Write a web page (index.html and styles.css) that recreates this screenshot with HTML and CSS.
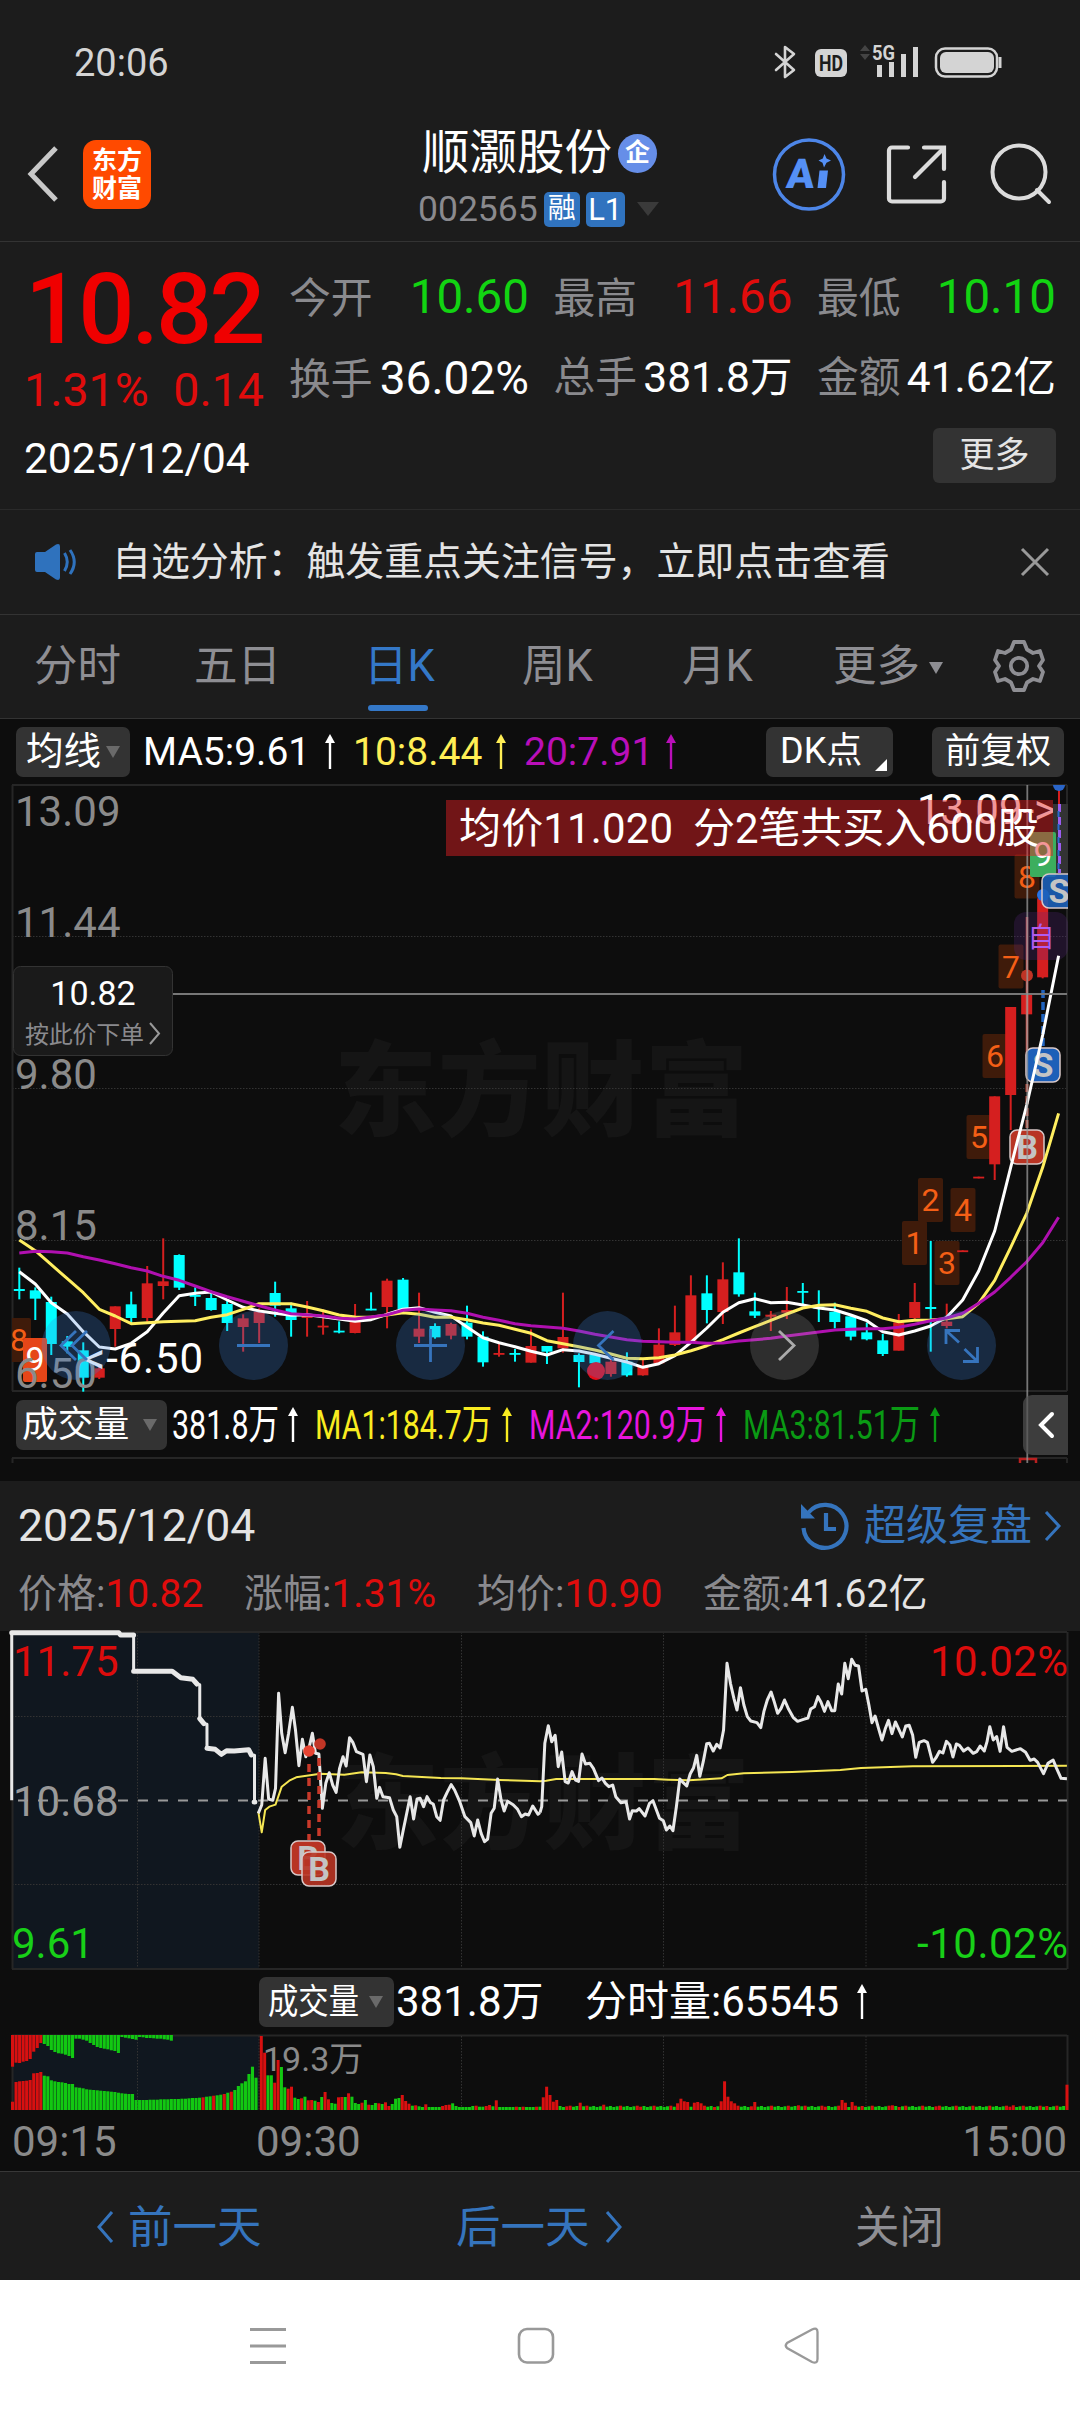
FILE: index.html
```html
<!DOCTYPE html>
<html lang="zh-CN">
<head>
<meta charset="utf-8">
<title>顺灏股份 002565</title>
<link rel="stylesheet" href="styles.css">
</head>
<body>
<div class="status">
  <span class="clock">20:06</span>
  <svg class="status-icons" width="236" height="40" viewBox="770 40 236 40">
    <g fill="none" stroke="#d4d4d4" stroke-width="2.6" stroke-linejoin="round" stroke-linecap="round"><path d="M776 54 L794 70 L785 77 V47 L794 54 L776 70"/></g>
    <rect x="815" y="49" width="32" height="28" rx="6" fill="#d4d4d4"/>
    <text x="831" y="70.500" class="hd" text-anchor="middle" textLength="24" lengthAdjust="spacingAndGlyphs">HD</text>
    <path d="M860 51l5-6 5 6zM860 54l5 6 5-6z" fill="#444"/>
    <text x="872" y="60" class="fiveg" textLength="23" lengthAdjust="spacingAndGlyphs">5G</text>
    <g fill="#d4d4d4"><rect x="877" y="65" width="5" height="12"/><rect x="889" y="62" width="5" height="15"/><rect x="901" y="54" width="5" height="23"/><rect x="913" y="47" width="5" height="30"/></g>
    <rect x="936" y="48.500" width="61" height="28" rx="9" fill="none" stroke="#d4d4d4" stroke-width="2.500"/>
    <rect x="940" y="52" width="54" height="21" rx="6" fill="#d4d4d4"/><path d="M1000 57v11" stroke="#d4d4d4" stroke-width="3"/>
  </svg>
</div>

<header class="header">
  <svg class="back" width="31" height="60" viewBox="0 0 31 60"><path d="M29 4 L4 30 L29 56" fill="none" stroke="#c8c8c8" stroke-width="5"/></svg>
  <div class="logo"><span>东方</span><span>财富</span></div>
  <div class="title">
    <div class="name">顺灏股份<span class="ent">企</span></div>
    <div class="code">002565<span class="tag">融</span><span class="tag tag-l">L1</span><i class="tri tri-dark"></i></div>
  </div>
  <svg class="tools" width="290" height="74" viewBox="770 138 290 74">
    <circle cx="809" cy="174.500" r="34.500" fill="none" stroke="#4d86e8" stroke-width="3.500"/>
    <text transform="translate(785.500 187.500) skewX(-5)" class="ai">A</text>
    <path d="M819.500 170.500h8.500l-2 17.500h-8.500z" fill="#5590f5"/><path d="M824.500 154l2 4.500 4.500 2-4.500 2.200-2.500 4.800-1.500-4.800-4-2.200 4.300-2z" fill="#5590f5"/>
    <g fill="none" stroke="#dcdcdc" stroke-width="4.200" stroke-linecap="round"><path d="M908 147.500 H892 a3 3 0 0 0-3 3 V198.500 a3 3 0 0 0 3 3 H941 a3 3 0 0 0 3-3 V182"/><path d="M924 147.500H944V169"/><path d="M943 149 L915 177"/></g>
    <g fill="none" stroke="#dcdcdc" stroke-width="4"><circle cx="1019" cy="172" r="26.500"/><path d="M1037 190 L1049 202" stroke-linecap="round"/></g>
  </svg>
</header>

<section class="quote">
  <div class="price">
    <div class="last">10.82</div>
    <div class="chg"><span>1.31%</span><span>0.14</span></div>
    <div class="date">2025/12/04</div>
  </div>
  <div class="stats">
    <div class="stat"><label>今开</label><b class="green">10.60</b></div>
    <div class="stat"><label>最高</label><b class="red">11.66</b></div>
    <div class="stat"><label>最低</label><b class="green">10.10</b></div>
    <div class="stat"><label>换手</label><b class="pct">36.02%</b></div>
    <div class="stat"><label>总手</label><b class="sm">381.8万</b></div>
    <div class="stat"><label>金额</label><b class="sm">41.62亿</b></div>
    <button class="more">更多</button>
  </div>
</section>

<section class="notice">
  <svg width="46" height="40" viewBox="0 0 46 40"><path d="M3 12q0-2 2-2h8L24 2.500q4-1.500 4 2v31q0 3.500-4 2L13 30H5q-2 0-2-2z" fill="#2f72bd"/><path d="M32.500 11q5.500 9 0 18M38 8q8.500 12 0 24" fill="none" stroke="#2f72bd" stroke-width="3"/></svg>
  <span>自选分析：触发重点关注信号，立即点击查看</span>
  <svg class="close" width="30" height="30" viewBox="0 0 30 30"><path d="M2 2L28 28M28 2L2 28" stroke="#999" stroke-width="3"/></svg>
</section>

<nav class="tabs">
  <span>分时</span><span>五日</span><span class="active">日K</span><span>周K</span><span>月K</span><span>更多<i class="tri tri-tab"></i></span>
  <svg width="52" height="54" viewBox="-26 -27 52 54"><path d="M-5 -24 H5 L8 -16.500 L14 -13 L21 -15 L24 -6 L20 0 L24 6 L21 15 L14 13 L8 16.500 L5 24 H-5 L-8 16.500 L-14 13 L-21 15 L-24 6 L-20 0 L-24 -6 L-21 -15 L-14 -13 L-8 -16.500 Z" fill="none" stroke="#8e8e93" stroke-width="3.800" stroke-linejoin="round"/><circle r="8.200" fill="none" stroke="#8e8e93" stroke-width="3.800"/></svg>
</nav>

<div class="mabar">
  <button class="chip chip-ma">均线<i class="tri"></i></button>
  <span class="ma w">MA5:9.61</span><svg class="up w"><use href="#arrow"/></svg>
  <span class="ma y">10:8.44</span><svg class="up y"><use href="#arrow"/></svg>
  <span class="ma m">20:7.91</span><svg class="up m"><use href="#arrow"/></svg>
  <button class="chip chip-dk">DK点<i class="corner"></i></button>
  <button class="chip chip-fq">前复权</button>
</div>

<svg class="kchart" width="1080" height="614" viewBox="0 780 1080 614">
  <defs>
    <symbol id="arrow" viewBox="0 0 14 36" width="14" height="36"><path d="M5.800 8h2.400v27H5.800z" fill="currentColor"/><path d="M7 0l5 9H2z" fill="currentColor"/></symbol>
    <clipPath id="frame"><rect x="12" y="785" width="1056" height="607"/></clipPath>
  </defs>
  <text class="wm" x="334" y="1128" textLength="414">东方财富</text>
  <g class="grid"><path d="M12 936.500H1067M12 1088.500H1067M12 1240.500H1067"/></g>
  <path class="edge" d="M12 785H1067M12 1391H1067M12.500 785V1391M1067 785V1391"/>
  <g class="axis"><text x="15" y="826">13.09</text><text x="15" y="937">11.44</text><text x="15" y="1089">9.80</text><text x="15" y="1240">8.15</text></g>
  <text class="peak" x="917" y="824">13.09-&gt;</text>
  <g clip-path="url(#frame)">
    <g class="labels" id="labels"></g>
    <rect x="1053" y="804" width="15" height="70" fill="#333"/>
    <g id="candles"></g>
    <path d="M1059 785V805" stroke="#d51f1f" stroke-width="2"/>
    <path d="M1027 917V1072" stroke="#d8504a" stroke-width="2.500"/>
    <path d="M1043 990V1047" stroke="#2064c0" stroke-width="3.500" stroke-dasharray="8 4"/>
    <path d="M1059.500 804V873" stroke="#9b5cf0" stroke-width="3" stroke-dasharray="8 5"/>
    <path d="M1058.500 811V873" stroke="#2a6ad0" stroke-width="2" stroke-dasharray="6 7"/>
    <path d="M1027 1084V1130" stroke="#c05040" stroke-width="3" stroke-dasharray="8 4"/>
    <circle cx="596" cy="1371" r="9" fill="#e80c18"/>
    <circle cx="1027" cy="975.500" r="6" fill="#c03425"/><circle cx="1059" cy="785" r="6" fill="#2a65c8"/>
    <rect x="1030" y="832" width="26" height="45" rx="2" fill="#3cae5e"/><text class="nine" x="1043" y="866">9</text>
    <circle cx="1043" cy="895" r="6" fill="#2673e8"/>
    <g class="sq blue"><rect x="1042" y="874" width="36" height="34" rx="7" fill-opacity=".9"/><text x="1059" y="903">S</text></g>
    <rect x="1014" y="912" width="54" height="48" rx="12" fill="rgba(90,40,130,.25)"/><text x="1041" y="947" class="zi">自</text>
    <g class="sq blue"><rect x="1026" y="1048" width="34" height="34" rx="7"/><text x="1043" y="1077">S</text></g>
    <g class="sq redb"><rect x="1010" y="1130" width="34" height="34" rx="7"/><text x="1027" y="1159">B</text></g>
    <g id="lines"></g>
    <rect x="6" y="1318" width="25" height="44" rx="2" fill="#3f1b0a"/><text class="num" x="19" y="1351">8</text>
    <rect x="23" y="1338" width="24" height="44" rx="2" fill="#e64618"/><text class="nine" x="35" y="1371">9</text>
  </g>
  <g class="axis"><text x="15" y="1388">6.50</text></g>
  <text class="low" x="84" y="1373" textLength="119">&lt;-6.50</text>
  <path d="M173 994H1067" stroke="#777" stroke-width="2"/>
  <path d="M1027.300 785V1463" stroke="#999" stroke-opacity=".75" stroke-width="1.800"/>
  <rect x="446" y="800" width="607" height="56" fill="rgba(228,32,36,.47)"/>
  <text class="banner" x="459" y="843" textLength="214">均价11.020</text><text class="banner" x="693" y="843" textLength="346">分2笔共买入600股</text>
  <rect x="13.500" y="966.500" width="159" height="89" rx="7" fill="#1a1a1a" stroke="#333"/>
  <text class="order" x="93" y="1005">10.82</text><text class="ordersub" x="25" y="1043" textLength="119">按此价下单</text>
  <path d="M150 1023L159 1033.500L150 1044" fill="none" stroke="#999" stroke-width="2"/>
  <g fill="rgba(60,133,225,.25)"><circle cx="76" cy="1345.500" r="34.500"/><circle cx="253.500" cy="1345.500" r="34.500"/><circle cx="430.500" cy="1345.500" r="34.500"/><circle cx="607.500" cy="1345.500" r="34.500"/><circle cx="784.500" cy="1345.500" r="34.500" fill="rgba(180,180,180,.2)"/><circle cx="961.500" cy="1345.500" r="34.500"/></g>
  <g fill="none" stroke="#3674bd" stroke-width="2.800"><path d="M76 1331L61 1345.500L76 1360M87 1331L72 1345.500L87 1360M237 1345.500H270M414 1345.500H447M430.500 1329V1362M613.500 1331L598.500 1345.500L613.500 1360"/><path d="M960 1330.500H946V1344M946 1330.500L959 1342.500M977.500 1347V1361.500H963M977.500 1361.500L964.500 1349"/><path d="M779 1331L794 1345.500L779 1360" stroke="#aaa"/></g>
</svg>

<div class="volbar">
  <button class="chip chip-vol">成交量<i class="tri"></i></button>
  <svg width="780" height="50" viewBox="168 1400 780 50" class="vtext">
    <text x="172" y="1439" fill="#fff" textLength="107" lengthAdjust="spacingAndGlyphs">381.8万</text><use href="#arrow" x="286" y="1407" color="#fff"/>
    <text x="315" y="1439" fill="#f9ec20" textLength="177" lengthAdjust="spacingAndGlyphs">MA1:184.7万</text><use href="#arrow" x="500" y="1407" color="#f9ec20"/>
    <text x="529" y="1439" fill="#e815dd" textLength="177" lengthAdjust="spacingAndGlyphs">MA2:120.9万</text><use href="#arrow" x="714" y="1407" color="#e815dd"/>
    <text x="743" y="1439" fill="#0a9a14" textLength="177" lengthAdjust="spacingAndGlyphs">MA3:81.51万</text><use href="#arrow" x="928" y="1407" color="#0a9a14"/>
  </svg>
  <div class="drawer"><svg width="20" height="30" viewBox="0 0 20 30"><path d="M15 4L4 15L15 26" fill="none" stroke="#fff" stroke-width="4" stroke-linecap="round"/></svg></div>
</div>
<svg class="strip" width="1080" height="25" viewBox="0 1456 1080 25"><path class="edge" d="M12 1458H1067M12.500 1458V1463M1067 1458V1463"/><path d="M1020 1463V1459H1036V1463" fill="none" stroke="#b82020" stroke-width="2.500"/></svg>

<section class="review">
  <div class="review-top"><span class="rdate">2025/12/04</span>
    <a class="replay"><svg width="52" height="52" viewBox="-26 -26 52 52"><path d="M-16.500 -13.500A21.500 21.500 0 1 1 -21.500 2" fill="none" stroke="#3574bd" stroke-width="4.200"/><path d="M-24 -22V-7.500H-10z" fill="#3574bd"/><path d="M1 -13V3H11" fill="none" stroke="#3574bd" stroke-width="4.200"/></svg>超级复盘<svg width="18" height="32" viewBox="0 0 18 32"><path d="M2 2L15 16L2 30" fill="none" stroke="#3574bd" stroke-width="3"/></svg></a>
  </div>
  <div class="review-row"><span>价格:<b class="red">10.82</b></span><span>涨幅:<b class="red">1.31%</b></span><span>均价:<b class="red">10.90</b></span><span>金额:<b>41.62亿</b></span></div>
</section>

<svg class="minute" width="1080" height="346" viewBox="0 1631 1080 346">
  <rect x="12" y="1632" width="247" height="337" fill="#10171f"/>
  <text class="wm" x="336" y="1841" textLength="414">东方财富</text>
  <g class="grid"><path d="M12 1716.500H1067M12 1884.500H1067M137.500 1632V1969M259 1632V1969M461.500 1632V1969M663.500 1632V1969M866 1632V1969"/></g>
  <path class="edge" d="M12 1632H1067M12 1969H1067M12.500 1632V1969M1067.500 1632V1969"/>
  <path d="M12 1800.500H1067" stroke="#999" stroke-width="1.800" stroke-dasharray="10 10" stroke-dashoffset="-6"/>
  <g class="axis"><text x="13" y="1676" class="tr">11.75</text><text x="13" y="1816" class="tg">10.68</text><text x="12" y="1958" class="tgr">9.61</text><text x="1068" y="1676" class="tr" text-anchor="end" textLength="138">10.02%</text><text x="1068" y="1958" class="tgr" text-anchor="end" textLength="151">-10.02%</text></g>
  <g class="trace" transform="translate(0 1620) scale(.34439 .33333)">
    <polyline class="avg" points="750,575 760,637 770,570 782,560 800,554 818,500 840,482 860,472 900,466 930,461 1000,464 1050,457 1120,459 1150,463 1170,468 1280,474 1340,475 1450,480 1568,484 1586,482 1615,477 1900,477 1940,479 2000,481 2050,478 2095,475 2112,465 2160,460 2300,456 2440,450 2500,444 2650,439 3098,437"/>
    <polyline points="34,541 34,38 345,38 350,45 388,45 388,154 500,154 525,173 560,178 572,192 580,194 580,296 592,311 601,313 601,385 625,388 643,403 658,392 680,393 722,389 730,405 739,406 739,546"/>
    <path class="thick" d="M34 38H345L350 45H388M388 154H500L525 173L560 178L572 192M580 296L592 311M601 385L625 388L643 403L658 392L680 393L722 389L730 405M738 546H740"/>
    <polyline points="750,580 760,555 770,415 780,537 792,541 800,505 809,220 818,340 828,398 838,340 849,262 858,330 868,437 878,358 888,410 897,385 907,340 916,400 926,402 936,565 946,490 956,458 966,495 976,517 986,445 996,410 1005,438 1015,353 1025,368 1035,395 1054,403 1064,485 1074,405 1084,440 1094,535 1102,502 1112,530 1131,533 1142,570 1152,590 1161,682 1171,630 1191,530 1201,597 1211,537 1220,535 1230,560 1240,530 1250,548 1258,552 1268,590 1278,601 1288,540 1298,518 1310,494 1320,510 1335,545 1350,590 1367,608 1377,648 1387,600 1397,640 1407,665 1416,657 1426,580 1435,565 1445,477 1455,540 1464,573 1474,544 1490,554 1503,568 1514,590 1525,582 1535,585 1547,558 1562,583 1568,578"/>
    <polyline transform="translate(1568 0)" points="0,578 5,560 14,370 24,317 34,365 44,346 53,440 63,396 73,485 82,489 93,455 103,480 112,484 122,402 132,432 145,430 155,445 170,482 180,474 190,490 200,500 211,495 220,530 235,548 250,545 260,597 268,572 280,573 288,566 305,588 318,550 328,542 347,595 358,602 367,630 377,618 386,632 396,560 406,477 416,488 426,498 436,462 446,443 455,406 464,469 474,425 484,371 492,370 503,393 513,373 523,384 533,330 543,130 553,190 563,235 572,270 582,203 592,255 602,290 612,303 630,308 641,323 650,275 660,240 671,216 680,245 690,280 700,265 710,240 722,268 735,292 748,304 765,298 778,294 786,267 797,260 807,230 816,247 826,274 836,245 847,272 856,272 866,192 876,222 885,130 895,176 905,118 915,136 925,138 935,213 946,208 955,255 964,308 973,288 983,325 993,360 1002,328 1012,301 1022,341 1032,306 1042,328 1052,351 1062,318 1072,316 1082,345 1091,412 1101,367 1115,362 1125,367 1140,427 1150,413 1160,394 1170,399 1180,364 1190,375 1199,411 1209,372 1218,376 1230,393 1243,384 1258,400 1268,395 1278,378 1290,393 1298,365 1306,320 1316,360 1326,350 1336,394 1346,320 1356,382 1370,394 1395,386 1410,397 1423,421 1435,417 1445,427 1462,461 1475,430 1490,420 1500,445 1513,475 1530,476"/>
  </g>
  <g stroke="#c8392a" stroke-width="3.500" stroke-dasharray="8 6"><path d="M309 1764V1840M319 1758V1850"/></g>
  <circle cx="309" cy="1751" r="5.800" fill="#e84432"/><circle cx="320" cy="1744" r="5.800" fill="#c23626"/>
  <g class="sq redb"><rect x="291" y="1841" width="34" height="34" rx="7"/><text x="308" y="1870">B</text></g>
  <g class="sq redb"><rect x="302" y="1852" width="34" height="34" rx="7" fill-opacity=".9"/><text x="319" y="1881">B</text></g>
</svg>

<div class="mvol">
  <button class="chip chip-mvol"><svg width="93" height="46" viewBox="0 0 93 46"><text x="0" y="35" textLength="91" lengthAdjust="spacingAndGlyphs" fill="#fff" font-size="35">成交量</text></svg><i class="tri"></i></button>
  <span class="total">381.8万</span><span class="slice">分时量:65545</span><svg class="up w"><use href="#arrow"/></svg>
</div>
<svg class="volchart" width="1080" height="144" viewBox="0 2027 1080 144">
  <rect x="12" y="2035" width="247" height="75" fill="#10171f"/>
  <path class="edge" d="M12 2035.500H1067M12.500 2035V2110M1067.500 2035V2110"/>
  <g class="grid"><path d="M137.500 2036V2110M259 2036V2110M461.500 2036V2110M663.500 2036V2110M866 2036V2110"/></g>
  <g id="vol"></g>
  <text x="263" y="2071" class="vmax">19.3万</text>
  <g class="axis"><text x="12" y="2156">09:15</text><text x="256" y="2156">09:30</text><text x="1067" y="2156" text-anchor="end">15:00</text></g>
</svg>

<footer class="days">
  <span class="prev"><svg width="18" height="34" viewBox="0 0 18 34"><path d="M16 2L3 17L16 32" fill="none" stroke="#3574bd" stroke-width="3"/></svg><em>前一天</em></span>
  <span class="next"><em>后一天</em><svg width="18" height="34" viewBox="0 0 18 34"><path d="M2 2L15 17L2 32" fill="none" stroke="#3574bd" stroke-width="3"/></svg></span>
  <span class="shut"><em>关闭</em></span>
</footer>
<div class="sysnav"><svg width="1080" height="132" viewBox="0 2280 1080 132"><g fill="none" stroke="#999" stroke-width="2.600"><path d="M250 2329.500H286M250 2346H286M250 2362.500H286" stroke-width="3"/><rect x="519" y="2329" width="34" height="33.500" rx="8"/><path d="M787 2343Q784.500 2345.500 787 2348L812 2362Q817.500 2364 817.500 2359V2332Q817.500 2327 812 2329.500Z" stroke-width="2.300"/></g></svg></div>
<script src="chart.js"></script>
</body>
</html>
```
FILE: styles.css
```css
* { box-sizing: border-box; }
body { margin: 0; width: 1080px; background: #0d0d0d; color: #fff; font-family: Roboto, "Noto Sans CJK SC", sans-serif; }
svg { display: block; flex: none; overflow: visible; }
button { border: 0; padding: 0; margin: 0; font: inherit; color: inherit; }
b { font-weight: 400; }
i, em { font-style: normal; }
.red { color: #e00c0c; }
.green { color: #12d412; }
.tri { display: block; border: 7.5px solid transparent; border-top: 12px solid #6a6a6a; border-bottom: 0; }
.tri-dark { border: 11px solid transparent; border-top: 14px solid #3a3a3a; border-bottom: 0; margin-left: 12px; }
.tri-tab { border-top-color: #8e8e93; margin: 2px 0 0 9px; }

.status { height: 82px; background: #1c1c1c; display: flex; justify-content: space-between; align-items: flex-start; padding: 40px 74px 0; }
.clock { font-size: 38px; color: #d4d4d4; line-height: 46px; }
.hd { font: 700 22px Roboto, sans-serif; fill: #1c1c1c; }
.fiveg { font: 700 21px Roboto, sans-serif; fill: #d4d4d4; }

.header { height: 160px; background: #1c1c1c; border-bottom: 1px solid #333; display: flex; padding: 0 20px 0 27px; }
.back { margin-top: 62px; }
.logo { width: 68px; height: 69px; margin: 58px 0 0 25px; border-radius: 13px; background: #ff4a00; font-size: 25px; font-weight: 700; line-height: 28px; display: flex; flex-direction: column; align-items: center; justify-content: center; }
.title { margin: 41px 0 0 267px; width: 352px; }
.name { font-size: 47.5px; line-height: 62px; height: 60px; display: flex; align-items: center; margin-left: 4px; }
.ent { width: 39px; height: 39px; border-radius: 50%; background: #668ee8; font-size: 25px; font-weight: 700; line-height: 37px; text-align: center; margin-left: 6px; }
.code { font-size: 35.5px; line-height: 44px; color: #8a8a8e; display: flex; align-items: center; margin-top: 4px; }
.tag { background: #3073bf; color: #fff; border-radius: 5px; height: 35px; width: 36px; margin-left: 6px; font-size: 28px; line-height: 34px; text-align: center; }
.tag-l { width: 39px; margin-left: 6px; font-size: 31px; line-height: 36px; }
.tools { margin-top: 56px; }
.ai { font: 900 41px Roboto, sans-serif; fill: #5590f5; }

.quote { height: 268px; background: #1c1c1c; border-bottom: 1px solid #2a2a2a; display: flex; padding: 0 24px; }
.price { width: 265px; }
.last { font-size: 99px; font-weight: 500; line-height: 100px; color: #f00000; margin: 17px 0 0 1px; letter-spacing: -3px; }
.chg { display: flex; justify-content: space-between; font-size: 46.5px; line-height: 52px; color: #e00c0c; margin-top: 5px; padding-right: 25px; }
.date { font-size: 42.4px; line-height: 48px; margin-top: 19px; }
.stats { flex: 1; display: grid; grid-template-columns: 240px 239px 239px; column-gap: 24.5px; grid-template-rows: 81px 82px 56px; padding-top: 15px; }
.stat { display: flex; justify-content: space-between; align-items: baseline; line-height: 80px; }
.stat label { font-size: 41.8px; color: #8a8a8e; }
.stat b { font-size: 47.5px; }
.stat b.pct { font-size: 46px; }
.stat b.sm { font-size: 42.5px; }
.more { grid-column: 3; justify-self: end; width: 123px; height: 55px; margin-top: 8px; border-radius: 6px; background: #333; color: #e4e4e4; font-size: 35px; line-height: 54px; }

.notice { height: 105px; background: #1c1c1c; border-bottom: 1px solid #333; display: flex; align-items: center; padding: 0 30px 0 32px; font-size: 38.9px; color: #e4e4e4; }
.notice span { margin-left: 34px; line-height: 50px; white-space: nowrap; }
.notice .close { margin-left: auto; }

.tabs { height: 104px; background: #1c1c1c; border-bottom: 1px solid #333; display: grid; grid-template-columns: 160px 172px 156px 160px 151px 160px 52px; padding-left: 34px; font-size: 43.5px; color: #8e8e93; line-height: 104px; }
.tabs span { display: flex; align-items: center; white-space: nowrap; position: relative; }
.tabs .active { color: #3478c8; text-indent: -2px; }
.tabs .active::after { content: ""; position: absolute; left: 2px; bottom: 8px; width: 60px; height: 6px; border-radius: 3px; background: #3478c8; }
.tabs svg { margin-top: 24px; }

.chip { height: 50px; border-radius: 7px; background: #333; display: flex; align-items: center; line-height: 49px; }
.mabar { height: 61px; display: flex; align-items: center; padding-left: 16px; padding-top: 4px; font-size: 39px; }
.chip-ma { width: 114px; padding-left: 10px; font-size: 37.5px; gap: 5px; margin-right: 13px; }
.ma { line-height: 50px; white-space: nowrap; }
.ma.w { width: 180px; } .ma.y { width: 141px; } .ma.m { width: 140px; }
.w { color: #fff; } .y { color: #ffee55; } .m { color: #b90fb9; }
.up { width: 14px; height: 36px; margin-right: 16px; }
.chip-dk { width: 127px; padding-left: 14px; font-size: 36px; margin-left: 72px; position: relative; }
.corner { position: absolute; right: 6px; bottom: 6px; border-left: 12px solid transparent; border-bottom: 12px solid #fff; }
.chip-fq { width: 132px; justify-content: center; font-size: 35.5px; margin-left: 39px; }

.kchart { position: relative; z-index: 1; font-size: 42px; }
.wm { font: 900 103px "Noto Sans CJK SC", sans-serif; fill: #151515; }
.grid path { fill: none; stroke: #333; stroke-width: 1; stroke-dasharray: 1.5 1.5; }
.edge { fill: none; stroke: #262626; stroke-width: 2; }
.axis { font-size: 42px; fill: #8a8a8a; }
.axis .tr { fill: #dc0c0c; } .axis .tg { fill: #999; } .axis .tgr { fill: #18d018; }
.peak, .low, .banner { font-size: 42px; fill: #fff; }
.num { font-size: 32px; fill: #f55f16; text-anchor: middle; }
.nine { font-size: 34px; fill: #fff; text-anchor: middle; }
.zi { font-size: 27px; fill: #b05cf0; text-anchor: middle; }
.sq rect { stroke: #d8c8c8; stroke-width: 1.5; }
.sq text { font-size: 34px; font-weight: 700; fill: #c4c4c4; text-anchor: middle; }
.blue rect { fill: #1c5fb8; } .redb rect { fill: #b83424; }
.order { font-size: 34px; fill: #fff; text-anchor: middle; }
.ordersub { font-size: 24px; fill: #8a8a8e; }

.volbar { height: 62px; display: flex; padding: 6px 0 0 16px; }
.chip-vol { width: 151px; padding-left: 6px; gap: 14px; font-size: 35.8px; margin-right: 1px; }
.vtext { font-size: 41px; }
.drawer { width: 45px; height: 60px; margin: -5px 0 0 75px; background: rgba(80,80,80,.72); border-radius: 9px 0 0 9px; display: flex; align-items: center; padding-left: 14px; position: relative; z-index: 2; }

.review { height: 150px; background: #1c1c1c; }
.review-top { display: flex; justify-content: space-between; align-items: center; height: 90px; padding: 0 18px 0 18px; font-size: 44.6px; color: #e4e4e4; }
.replay { display: flex; align-items: center; color: #3574bd; font-size: 42px; line-height: 64px; }
.replay svg:first-child { margin-right: 13px; }
.replay svg:last-child { margin-left: 12px; }
.review-row { display: grid; grid-template-columns: 226px 233px 226px 300px; padding-left: 18px; font-size: 39px; line-height: 46px; color: #8a8a8e; }
.review-row b:not(.red) { color: #e4e4e4; }

.trace polyline, .trace path { fill: none; stroke: #e8e8e8; stroke-width: 3px; vector-effect: non-scaling-stroke; stroke-linejoin: round; }
.trace .avg { stroke: #f5e653; stroke-width: 2px; }
.trace .thick { stroke-width: 5px; stroke-linecap: round; }
.mvol { height: 50px; display: flex; align-items: center; padding-left: 259px; font-size: 42px; line-height: 54px; white-space: nowrap; }
.chip-mvol { width: 135px; padding-left: 9px; gap: 8px; }
.total { margin-left: 2px; width: 189px; }
.slice { width: 270px; }
.vmax { font-size: 34px; fill: #8a8a8a; }

.days { height: 109px; background: #1c1c1c; border-top: 1px solid #383838; display: grid; grid-template-columns: 360px 360px 360px; font-size: 44.5px; line-height: 106px; color: #3574bd; }
.days span { display: flex; align-items: center; }
.days em { padding-top: 3px; }
.prev { gap: 14px; padding-left: 96px; }
.next { gap: 15px; padding-left: 96px; }
.shut { color: #8e8e93; padding-left: 135px; }
.sysnav { background: #fff; height: 132px; }
```
FILE: chart.js
```js
// y values are thirds of a pixel below y = 1080
const NS = 'http://www.w3.org/2000/svg';
const X = k => 19.3 + k * 15.99;
const Y = v => 1080 + v / 3;
function add(id, tag, attrs, text) {
  const el = document.createElementNS(NS, tag);
  for (const a in attrs) el.setAttribute(a, attrs[a]);
  if (text) el.textContent = text;
  document.getElementById(id).appendChild(el);
}

// colour, high, body top, body bottom, low
const candles = `c 563 627 633 658|c 622 631 656 720|c 650 666 792 825|c 768 784 800 820|c 787 811 893 935|r 855 865 893 897|r 679 679 747 800|c 635 673 714 730|r 558 610 714 725|r 475 604 618 658|c 523 525 623 630|c 622 645 650 678|c 640 654 690 692|c 660 672 729 753|r 703 715 741 815|r 685 695 729 789|c 605 639 677 710|c 668 685 720 770|r 663 708 714 770|r 688 737 741 764|c 724 752 757 760|r 672 710 759 760|c 637 686 691 691|r 596 602 681 745|c 594 599 687 700|r 638 746 770 789|c 730 738 772 776|r 728 732 767 778|c 677 728 770 778|c 754 770 847 860|r 790 819 824 830|c 807 819 824 845|r 748 798 848 848|c 798 798 815 852|r 638 771 805 818|c 820 825 846 922|c 820 825 850 852|r 835 845 882 890|c 817 845 886 890|r 840 860 886 887|r 745 794 850 852|r 677 757 795 798|r 586 646 787 787|c 586 640 690 730|r 547 598 696 732|c 475 577 643 650|c 638 694 707 714|r 693 704 710 753|r 621 690 698 717|c 609 633 638 676|c 631 680 686 726|c 668 695 726 745|c 705 709 770 781|c 728 757 778 781|c 762 781 822 828|r 702 727 812 812|r 609 666 714 720|c 483 681 687 815|r 671 725 738 745|r 511 511 516 516|r 290 290 295 295|r 49 49 253 300|r -219 -219 45 150|r -258 -258 -197 -197|r -550 -545 -308 -305`.split('|');
candles.forEach((row, k) => {
  const [c, hi, top, bot, lo] = row.split(' ').map((v, i) => i ? +v : v);
  const fill = c === 'c' ? '#00ffff' : '#d51f1f', x = X(k);
  add('candles', 'rect', { x: x - 1, y: Y(hi), width: 2, height: Math.max(0, (lo - hi) / 3), fill });
  add('candles', 'rect', { x: x - 5.5, y: Y(top), width: 11, height: Math.max(1.8, (bot - top) / 3), fill });
});

const ma = {
  '#fff': [575,612,668,702,755,801,807,790,755,699,647,640,636,660,682,693,700,706,704,710,717,724,719,703,688,683,697,708,741,773,788,800,814,825,809,813,823,835,846,862,851,827,787,744,697,668,656,668,667,675,684,690,705,722,755,765,753,738,712,660,573,453,262,75,-135,-373],
  '#ffee60': [480,512,554,596,638,688,708,731,728,725,724,722,712,704,688,671,671,671,681,692,705,711,712,705,698,703,712,712,719,729,736,748,760,782,791,800,810,822,835,836,833,825,812,797,779,759,740,721,702,684,676,674,685,694,714,725,721,720,716,710,670,601,502,400,262,100],
  '#b010b0': [519,514,515,519,530,540,551,563,573,589,601,618,635,650,664,677,690,701,704,708,715,717,711,704,691,687,690,692,700,712,721,731,737,741,745,753,763,771,779,784,785,787,787,790,789,783,779,775,768,762,756,750,748,746,746,742,733,722,714,700,670,636,592,545,488,412]
};
for (const stroke in ma) {
  add('lines', 'polyline', { points: ma[stroke].map((v, k) => X(k).toFixed(1) + ',' + Y(v).toFixed(1)).join(' '), fill: 'none', stroke, 'stroke-width': 3, 'stroke-linejoin': 'round' });
}

[[1, 902, 1221], [2, 918, 1178], [3, 934.5, 1241], [4, 950.5, 1188], [5, 966.5, 1115], [6, 982.5, 1034], [7, 998.5, 944.5], [8, 1014.5, 854.5]].forEach(([n, x, y]) => {
  add('labels', 'rect', { x, y, width: 25, height: 44, rx: 2, fill: '#3f1b0a' });
  add('labels', 'text', { x: x + 12.5, y: y + 33, class: 'num' }, String(n));
});

const R = '#d81010', G = '#12c812';
function bar(x, y, w, h, fill) { add('vol', 'rect', { x: x.toFixed(2), y: y.toFixed(1), width: w, height: h.toFixed(1), fill }); }
// call auction: unmatched volume hangs from the top, matched volume rises from the base
const hang = [95,83,84,80,78,72,50,39,24,27,33,45,51,55,56,59,63,69,11,11,14,17,24,30,36,39,41,43,46,48,54,6,8,10,12,14,6,7,9,9,10,11,11,13,14,17];
const rise = [25,84,86,87,88,90,110,111,114,103,101,89,86,84,83,81,78,78,68,67,65,62,61,60,59,58,57,56,55,54,52,50,49,48,48,30,30,30,30,31,31,31,32,32,32,33,33,33,34,34,35,36,36,37,38,40,41,43,44,46,48,52,55,60,72,80,86,108,130,97];
const step = 247 / rise.length;
rise.forEach((h, i) => {
  const red = i < 9 || [54, 57, 60, 62].includes(i);
  const x = 11 + i * step;
  bar(x, 2110 - h / 3, 3.1, h / 3, red ? R : G);
  if (hang[i]) bar(x, 2035, 3.1, hang[i] / 3, i < 9 ? R : G);
});
// minute volumes
const seq = 'r222 r172 g104 g104 r82 r150 g129 g68 r64 r70 g37 g33 r35 g40 r29 r30 g28 r24 g39 r54 r32 g21 g19 r38 r39 g39 r50 g40 g21 g18 r22 g30 r16 g15 g21 r20 g18 r23 r12 g18 g34 g36 r45 r27 r19 g13 r14 g11 g9 r17 g9 g9 g9 g9 r12 r15 r16 g20 g12 g9 g9 g9 g9 g12 r13 g10 g10 r12 r15 g11 r29 g9 g9 g9 g9 g9 r10 g9 r10 g9 g9 g9 r10'.split(' ');
const peaks = { 84: 38, 85: 70, 86: 45, 87: 25, 88: 30, 95: 22, 102: 16, 124: 20, 125: 34, 126: 26, 127: 24, 129: 22, 130: 24, 131: 20, 137: 26, 138: 86, 139: 40, 140: 26, 141: 20, 147: 24, 160: 14, 173: 30, 174: 22, 176: 24, 188: 14, 224: 14, 240: 76 };
for (let i = 0; i < 241; i++) {
  let c, h;
  if (seq[i]) { c = seq[i][0]; h = +seq[i].slice(1); }
  else { h = peaks[i] || 9 + (i * 7) % 5; c = peaks[i] || i % 5 === 2 || i % 11 === 3 ? 'r' : 'g'; }
  bar(259.8 + i * 3.357, 2110 - h / 3, 3, h / 3, c === 'r' ? R : G);
}
```
